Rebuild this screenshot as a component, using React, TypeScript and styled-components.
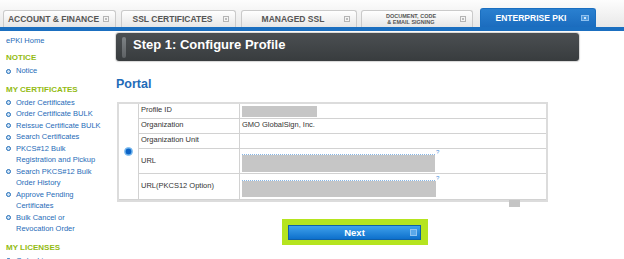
import React from "react";
import styled, { createGlobalStyle } from "styled-components";

const GlobalStyle = createGlobalStyle`
  body {
    margin: 0;
    background: #fff;
    font-family: "Liberation Sans", Arial, sans-serif;
  }
`;

const Page = styled.div`
  width: 624px;
  height: 259px;
  overflow: hidden;
  background: #fff;
`;

const TabBar = styled.div`
  display: flex;
  align-items: flex-end;
  height: 27px;
  padding-left: 3px;
  background: linear-gradient(#fdfdfd, #e8e8e8);
  border-bottom: 4px solid #1b6fc0;
`;

interface TabProps {
  $w: number;
  $gap: number;
  $active?: boolean;
}

const Tab = styled.div<TabProps>`
  display: flex;
  align-items: center;
  box-sizing: border-box;
  width: ${(p) => p.$w}px;
  margin-right: ${(p) => p.$gap}px;
  height: ${(p) => (p.$active ? 19 : 17)}px;
  border: 1px solid ${(p) => (p.$active ? "#1b6fc0" : "#cacaca")};
  border-bottom: none;
  border-radius: 3px 3px 0 0;
  background: ${(p) =>
    p.$active
      ? "linear-gradient(#2a80d0, #1b6cbe)"
      : "linear-gradient(#ffffff, #e6e6e6)"};
  color: ${(p) => (p.$active ? "#fff" : "#555")};
`;

const TabLabel = styled.span<{ $small?: boolean }>`
  flex: 1;
  text-align: center;
  font-weight: bold;
  font-size: ${(p) => (p.$small ? "5.5px" : "8.5px")};
  line-height: ${(p) => (p.$small ? "6.5px" : "10px")};
  white-space: nowrap;
`;

const TabIcon = styled.span<{ $active?: boolean }>`
  box-sizing: border-box;
  width: ${(p) => (p.$active ? 8 : 6)}px;
  height: 6px;
  margin-right: 6px;
  border: 1px solid ${(p) => (p.$active ? "#8fc0ee" : "#b4b4b4")};
  background: ${(p) => (p.$active ? "#4c97dc" : "#f4f4f4")};
  display: flex;
  align-items: center;
  justify-content: center;
  &::after {
    content: "";
    width: 2px;
    height: 2px;
    background: ${(p) => (p.$active ? "#cfe6fb" : "#bbb")};
  }
`;

const Main = styled.div`
  display: flex;
`;

const Sidebar = styled.div`
  width: 110px;
  flex-shrink: 0;
  box-sizing: border-box;
  padding: 4px 0 0 6px;
  font-size: 7.5px;
  line-height: 11.5px;
`;

const HomeLink = styled.div`
  color: #1f6cb8;
  margin-bottom: 5.5px;
`;

const SectionTitle = styled.div<{ $first?: boolean }>`
  color: #93bb12;
  font-weight: bold;
  font-size: 8px;
  margin-top: ${(p) => (p.$first ? 0 : 7)}px;
  margin-bottom: 1.5px;
`;

const NavItem = styled.div`
  display: flex;
  align-items: flex-start;
  color: #1f6cb8;
`;

const Bullet = styled.span`
  flex-shrink: 0;
  box-sizing: border-box;
  width: 5px;
  height: 5px;
  margin: 3.5px 5px 0 0;
  border-radius: 50%;
  border: 1.5px solid #1f6cb8;
  background: #cfe2f5;
`;

const Content = styled.div`
  flex: 1;
  padding: 2px 0 0 6px;
`;

const StepHeader = styled.div`
  position: relative;
  box-sizing: border-box;
  width: 463px;
  height: 28px;
  padding: 3px 0 0 17px;
  border-radius: 3px;
  background: linear-gradient(#4b4f52, #383c3e);
  box-shadow: 0 0 1px 1px #d6d6d6;
  color: #fff;
  font-weight: bold;
  font-size: 13px;
  line-height: 18px;
  &::before {
    content: "";
    position: absolute;
    left: 6px;
    top: 4px;
    width: 4px;
    height: 21px;
    border-radius: 2px;
    background: linear-gradient(#7d8285, #5d6164);
  }
`;

const SectionHeading = styled.div`
  margin: 16px 0 10px 0;
  color: #1f6cb8;
  font-weight: bold;
  font-size: 12.5px;
  line-height: 15px;
`;

const Table = styled.table`
  position: relative;
  margin-left: 1px;
  width: 431px;
  border-collapse: collapse;
  border: 2px solid #dcdcdc;
  font-size: 7.5px;
  color: #333;
`;

const Cell = styled.td<{ $h?: number }>`
  border: 1px solid #d2d2d2;
  height: ${(p) => p.$h ?? 15}px;
  padding: 0 0 0 2px;
  box-sizing: border-box;
  vertical-align: ${(p) => ((p.$h ?? 15) > 15 ? "middle" : "top")};
  line-height: 12px;
`;

const RadioCell = styled.td`
  width: 19px;
  border: 1px solid #d2d2d2;
  text-align: center;
  vertical-align: middle;
  padding: 0;
`;

const Radio = styled.span`
  display: inline-block;
  box-sizing: border-box;
  width: 9px;
  height: 9px;
  border-radius: 50%;
  border: 1.5px solid #8cc4f2;
  background: radial-gradient(circle, #0b63c6 55%, #4d9be3 60%);
  margin-top: 2px;
`;

const LabelCell = styled(Cell)`
  width: 101px;
`;

const Redacted = styled.div<{ $w: number; $h: number }>`
  width: ${(p) => p.$w}px;
  height: ${(p) => p.$h}px;
  background: #c6c6c6;
`;

const LinkBox = styled.div`
  display: flex;
  flex-direction: column;
  padding-top: 1px;
`;

const LinkLine = styled.div`
  display: flex;
  align-items: flex-end;
  height: 4px;
  width: 200px;
  color: #4a92dc;
  font-size: 6px;
  line-height: 6px;
  &::before {
    content: "";
    width: 193px;
    border-top: 1px dotted #86b6e6;
    margin-right: 1px;
  }
`;

const ScrollNub = styled.div`
  position: absolute;
  right: 27px;
  bottom: -6px;
  width: 11px;
  height: 7px;
  background: #c4c4c4;
`;

const NextFrame = styled.div`
  margin: 17px 0 0 166px;
  width: 146px;
  height: 26px;
  box-sizing: border-box;
  padding: 6px 7px 5px 6px;
  background: #b5e41f;
`;

const NextButton = styled.button`
  position: relative;
  display: block;
  width: 133px;
  height: 15px;
  border: 1px solid #0f5fa8;
  padding: 0;
  background: linear-gradient(#3fa1ec, #0d70cc);
  color: #fff;
  font-family: "Liberation Sans", Arial, sans-serif;
  font-weight: bold;
  font-size: 9.5px;
  line-height: 13px;
  &::after {
    content: "";
    position: absolute;
    right: 3px;
    top: 3px;
    width: 5px;
    height: 5px;
    border: 1px solid #8dc3f1;
    background: #5aa8ea;
  }
`;

const tabs = [
  { label: "ACCOUNT & FINANCE", w: 113, gap: 5 },
  { label: "SSL CERTIFICATES", w: 115, gap: 5 },
  { label: "MANAGED SSL", w: 116, gap: 4 },
  { label: "DOCUMENT, CODE|& EMAIL SIGNING", w: 112, gap: 7, small: true },
  { label: "ENTERPRISE PKI", w: 116, gap: 0, active: true },
];

const certItems = [
  ["Order Certificates"],
  ["Order Certificate BULK"],
  ["Reissue Certificate BULK"],
  ["Search Certificates"],
  ["PKCS#12 Bulk", "Registration and Pickup"],
  ["Search PKCS#12 Bulk", "Order History"],
  ["Approve Pending", "Certificates"],
  ["Bulk Cancel or", "Revocation Order"],
];

const App: React.FC = () => {
  return (
    <Page>
      <GlobalStyle />
      <TabBar>
        {tabs.map((t) => (
          <Tab key={t.label} $w={t.w} $gap={t.gap} $active={t.active}>
            <TabLabel $small={t.small}>
              {t.label.split("|").map((l) => (
                <div key={l}>{l}</div>
              ))}
            </TabLabel>
            <TabIcon $active={t.active} />
          </Tab>
        ))}
      </TabBar>
      <Main>
        <Sidebar>
          <HomeLink>ePKI Home</HomeLink>
          <SectionTitle $first>NOTICE</SectionTitle>
          <NavItem>
            <Bullet />
            <span>Notice</span>
          </NavItem>
          <SectionTitle>MY CERTIFICATES</SectionTitle>
          {certItems.map((lines) => (
            <NavItem key={lines[0]}>
              <Bullet />
              <span>
                {lines.map((l) => (
                  <div key={l}>{l}</div>
                ))}
              </span>
            </NavItem>
          ))}
          <SectionTitle>MY LICENSES</SectionTitle>
          <NavItem>
            <Bullet />
            <span>Order Licenses</span>
          </NavItem>
        </Sidebar>
        <Content>
          <StepHeader>Step 1: Configure Profile</StepHeader>
          <SectionHeading>Portal</SectionHeading>
          <Table>
            <tbody>
              <tr>
                <RadioCell rowSpan={5}>
                  <Radio />
                </RadioCell>
                <LabelCell>Profile ID</LabelCell>
                <Cell>
                  <Redacted $w={75} $h={11} style={{ marginTop: 2 }} />
                </Cell>
              </tr>
              <tr>
                <LabelCell>Organization</LabelCell>
                <Cell>GMO GlobalSign, Inc.</Cell>
              </tr>
              <tr>
                <LabelCell>Organization Unit</LabelCell>
                <Cell></Cell>
              </tr>
              <tr>
                <LabelCell $h={25}>URL</LabelCell>
                <Cell $h={25}>
                  <LinkBox>
                    <LinkLine>?</LinkLine>
                    <Redacted $w={193} $h={17} />
                  </LinkBox>
                </Cell>
              </tr>
              <tr>
                <LabelCell $h={26}>URL(PKCS12 Option)</LabelCell>
                <Cell $h={26}>
                  <LinkBox>
                    <LinkLine>?</LinkLine>
                    <Redacted $w={194} $h={16} />
                  </LinkBox>
                </Cell>
              </tr>
            </tbody>
            <ScrollNub as="caption" />
          </Table>
          <NextFrame>
            <NextButton>Next</NextButton>
          </NextFrame>
        </Content>
      </Main>
    </Page>
  );
};

export default App;
